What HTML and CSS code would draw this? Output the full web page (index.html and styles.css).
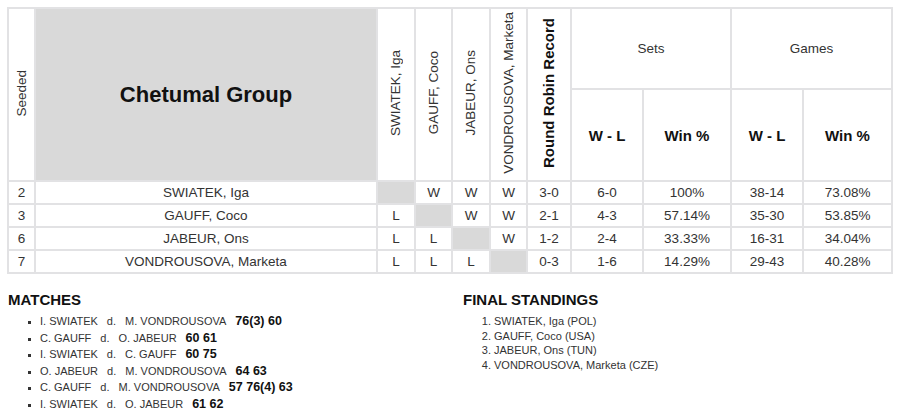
FILE: index.html
```html
<!DOCTYPE html>
<html>
<head>
<meta charset="utf-8">
<link rel="stylesheet" href="styles.css">
</head>
<body>
<div class="page">
  <table class="rr">
    <colgroup>
      <col class="c-seed"><col class="c-name"><col class="c-p"><col class="c-p2"><col class="c-p"><col class="c-p2"><col class="c-rr"><col class="c-wl"><col class="c-pct"><col class="c-wl"><col class="c-pct2">
    </colgroup>
    <thead>
      <tr class="h1">
        <th rowspan="2"><span class="rot">Seeded</span></th>
        <th rowspan="2" class="group">Chetumal Group</th>
        <th rowspan="2"><span class="rot">SWIATEK, Iga</span></th>
        <th rowspan="2"><span class="rot">GAUFF, Coco</span></th>
        <th rowspan="2"><span class="rot">JABEUR, Ons</span></th>
        <th rowspan="2"><span class="rot">VONDROUSOVA, Marketa</span></th>
        <th rowspan="2"><span class="rot bold">Round Robin Record</span></th>
        <th colspan="2" class="grp">Sets</th>
        <th colspan="2" class="grp">Games</th>
      </tr>
      <tr class="h2">
        <th class="sub">W - L</th>
        <th class="sub">Win %</th>
        <th class="sub">W - L</th>
        <th class="sub">Win %</th>
      </tr>
    </thead>
    <tbody>
      <tr><td>2</td><td>SWIATEK, Iga</td><td class="x"></td><td>W</td><td>W</td><td>W</td><td>3-0</td><td>6-0</td><td>100%</td><td>38-14</td><td>73.08%</td></tr>
      <tr><td>3</td><td>GAUFF, Coco</td><td>L</td><td class="x"></td><td>W</td><td>W</td><td>2-1</td><td>4-3</td><td>57.14%</td><td>35-30</td><td>53.85%</td></tr>
      <tr><td>6</td><td>JABEUR, Ons</td><td>L</td><td>L</td><td class="x"></td><td>W</td><td>1-2</td><td>2-4</td><td>33.33%</td><td>16-31</td><td>34.04%</td></tr>
      <tr><td>7</td><td>VONDROUSOVA, Marketa</td><td>L</td><td>L</td><td>L</td><td class="x"></td><td>0-3</td><td>1-6</td><td>14.29%</td><td>29-43</td><td>40.28%</td></tr>
    </tbody>
  </table>

  <div class="bottom">
    <section class="matches">
      <h2>MATCHES</h2>
      <ul>
        <li><span class="n">I. SWIATEK</span><span class="n">d.</span><span class="n">M. VONDROUSOVA</span><b>76(3) 60</b></li>
        <li><span class="n">C. GAUFF</span><span class="n">d.</span><span class="n">O. JABEUR</span><b>60 61</b></li>
        <li><span class="n">I. SWIATEK</span><span class="n">d.</span><span class="n">C. GAUFF</span><b>60 75</b></li>
        <li><span class="n">O. JABEUR</span><span class="n">d.</span><span class="n">M. VONDROUSOVA</span><b>64 63</b></li>
        <li><span class="n">C. GAUFF</span><span class="n">d.</span><span class="n">M. VONDROUSOVA</span><b>57 76(4) 63</b></li>
        <li><span class="n">I. SWIATEK</span><span class="n">d.</span><span class="n">O. JABEUR</span><b>61 62</b></li>
      </ul>
    </section>
    <section class="standings">
      <h2>FINAL STANDINGS</h2>
      <ol>
        <li>SWIATEK, Iga (POL)</li>
        <li>GAUFF, Coco (USA)</li>
        <li>JABEUR, Ons (TUN)</li>
        <li>VONDROUSOVA, Marketa (CZE)</li>
      </ol>
    </section>
  </div>
</div>
</body>
</html>
```

FILE: styles.css
```css
html, body {
  margin: 0;
  padding: 0;
  background: #ffffff;
}

body {
  font-family: "Liberation Sans", Arial, sans-serif;
  color: #333333;
}

.page {
  padding: 7px 0 0 7px;
}

.rr {
  border-collapse: collapse;
  table-layout: fixed;
  width: 886px;
  border: 2px solid #dcdcdc;
}

.c-seed { width: 27px; }
.c-name { width: 342px; }
.c-p { width: 38px; }
.c-p2 { width: 37px; }
.c-rr { width: 44px; }
.c-wl { width: 72px; }
.c-pct { width: 88px; }
.c-pct2 { width: 89px; }

.rr th,
.rr td {
  border: 2px solid #e2e2e4;
  padding: 0;
  text-align: center;
  vertical-align: middle;
  font-size: 13.5px;
  font-weight: normal;
  color: #333333;
}

.rr tr.h1 { height: 81px; }
.rr tr.h2 { height: 92px; }
.rr tbody tr { height: 23px; }

.rot {
  display: inline-block;
  writing-mode: vertical-rl;
  transform: rotate(180deg);
  white-space: nowrap;
  line-height: 16px;
}

.rot.bold {
  font-weight: bold;
  font-size: 15px;
  color: #111111;
}

.rr th.group {
  background: #d9d9d9;
  font-size: 22px;
  font-weight: bold;
  color: #111111;
}

.rr th.sub {
  font-weight: bold;
  font-size: 15px;
  color: #111111;
}

.rr td.x {
  background: #d9d9d9;
}

.bottom {
  display: flex;
  margin-top: 17px;
}

.bottom h2 {
  margin: 0;
  font-size: 15px;
  line-height: 18px;
  font-weight: bold;
  color: #111111;
}

.matches {
  width: 455px;
  padding-left: 1px;
}

.matches ul {
  margin: 4px 0 0 0;
  padding-left: 32px;
  list-style: square;
}

.matches li {
  font-size: 11px;
  line-height: 16.6px;
  color: #333333;
}

.matches li::marker {
  font-size: 9px;
}

.matches .n {
  margin-right: 9px;
}

.matches b {
  font-size: 12.5px;
  color: #111111;
}

.standings ol {
  margin: 5px 0 0 0;
  padding-left: 31px;
}

.standings li {
  font-size: 11px;
  line-height: 14.6px;
  color: #333333;
}
```
